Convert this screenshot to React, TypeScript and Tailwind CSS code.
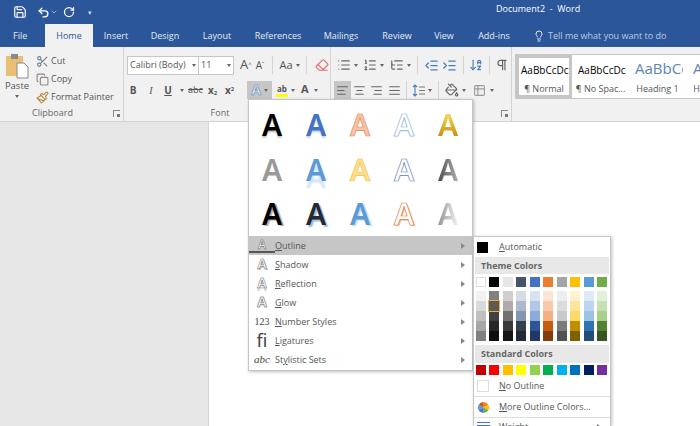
import {
  AlignCenter,
  AlignJustify,
  AlignLeft,
  AlignRight,
  ArrowDownAZ,
  ChevronDown,
  Copy,
  Eraser,
  IndentDecrease,
  IndentIncrease,
  Lightbulb,
  List,
  ListOrdered,
  ListTree,
  Paintbrush,
  PaintBucket,
  Pilcrow,
  RotateCw,
  Save,
  Scissors,
  Table2,
  Undo2,
} from "lucide-react";

const TABS = [
  { label: "Insert", w: "w-[46px]" },
  { label: "Design", w: "w-[52px]" },
  { label: "Layout", w: "w-[52px]" },
  { label: "References", w: "w-[70px]" },
  { label: "Mailings", w: "w-[56px]" },
  { label: "Review", w: "w-[56px]" },
  { label: "View", w: "w-[38px]" },
  { label: "Add-ins", w: "w-[62px]" },
];

const GOLD = "text-transparent bg-clip-text bg-gradient-to-b from-[#f5d84f] from-25% to-[#c48f08] to-75%";
const STEEL = "text-transparent bg-clip-text bg-gradient-to-r from-[#555] from-30% to-[#aaa] to-70%";
const SILVER = "text-transparent bg-clip-text bg-gradient-to-r from-[#999] from-30% to-[#eee] to-70%";

const GALLERY = [
  "text-black [text-shadow:0_2px_1px_#ccc]",
  "text-[#4472c4] [text-shadow:0_2px_1px_#c9d8ee]",
  "text-[#f6c3a6] [-webkit-text-stroke:0.7px_#e08a5c]",
  "text-white [-webkit-text-stroke:0.7px_#8fb4d3] [text-shadow:0_1px_1px_#d5e3f0]",
  GOLD,
  "text-[#999999]",
  "text-[#5b9bd5] [text-shadow:0_7px_2px_#d5e5f5]",
  "text-[#ffe08a] [-webkit-text-stroke:0.7px_#f2c14e]",
  "text-white [-webkit-text-stroke:0.7px_#5f80b8]",
  STEEL,
  "text-black [text-shadow:2px_1px_1px_#aaa]",
  "text-[#222a35] [text-shadow:2px_2px_1px_#9fc0dc]",
  "text-[#5b9bd5] [text-shadow:2px_1px_1px_#c4dcf2]",
  "text-white [-webkit-text-stroke:0.7px_#d9783a] [text-shadow:1px_1px_1px_#eab08a]",
  SILVER,
];

const MENU = [
  { icon: "A", iconClass: "text-[12px] text-white [-webkit-text-stroke:0.5px_#555] border-b-2 border-[#555] leading-[12px]", pre: "", key: "O", post: "utline", active: true },
  { icon: "A", iconClass: "text-[14px] text-white [-webkit-text-stroke:0.5px_#666] [text-shadow:1px_1px_0_#bbb]", pre: "", key: "S", post: "hadow" },
  { icon: "A", iconClass: "text-[14px] text-white [-webkit-text-stroke:0.5px_#666] [text-shadow:0_3px_1px_#ccc]", pre: "", key: "R", post: "eflection" },
  { icon: "A", iconClass: "text-[14px] text-white [-webkit-text-stroke:0.5px_#666] [text-shadow:0_0_2px_#999]", pre: "", key: "G", post: "low" },
  { icon: "123", iconClass: "text-[10px] text-[#444] font-['Liberation_Serif',serif] font-normal", pre: "", key: "N", post: "umber Styles" },
  { icon: "fi", iconClass: "text-[18px] text-[#444] font-normal font-['Noto_Sans',sans-serif]", pre: "", key: "L", post: "igatures" },
  { icon: "abc", iconClass: "text-[11px] italic text-[#444] font-normal font-['Liberation_Serif',serif]", pre: "St", key: "y", post: "listic Sets" },
];

const THEME = [
  ["#ffffff", "#f2f2f2", "#d9d9d9", "#bfbfbf", "#a6a6a6", "#808080"],
  ["#000000", "#808080", "#595959", "#404040", "#262626", "#0d0d0d"],
  ["#e7e6e6", "#d0cece", "#aeabab", "#767171", "#3a3838", "#171616"],
  ["#44546a", "#d6dce4", "#adb9ca", "#8496b0", "#333f4f", "#222a35"],
  ["#4472c4", "#d9e2f3", "#b4c6e7", "#8eaadb", "#2f5496", "#1f3864"],
  ["#ed7d31", "#fbe4d5", "#f7caac", "#f4b083", "#c55a11", "#833c0b"],
  ["#a5a5a5", "#ededed", "#dbdbdb", "#c9c9c9", "#7b7b7b", "#525252"],
  ["#ffc000", "#fff2cc", "#ffe599", "#ffd966", "#bf8f00", "#7f6000"],
  ["#5b9bd5", "#deeaf6", "#bdd6ee", "#9cc2e5", "#2e74b5", "#1f4e79"],
  ["#70ad47", "#e2efd9", "#c5e0b3", "#a8d08d", "#538135", "#385623"],
];

const STANDARD = ["#c00000", "#ff0000", "#ffc000", "#ffff00", "#92d050", "#00b050", "#00b0f0", "#0070c0", "#002060", "#7030a0"];

function Caret({ className = "" }: { className?: string }) {
  return <span className={`inline-block w-0 h-0 border-x-[2.5px] border-x-transparent border-t-[3px] border-t-[#666] ${className}`} />;
}

function Divider({ className = "" }: { className?: string }) {
  return <span className={`w-[1px] h-[18px] bg-[#d4d4d4] ${className}`} />;
}

function Launcher() {
  return (
    <span className="absolute right-[3px] bottom-[4px] w-[7px] h-[7px] border-l border-t border-[#888]">
      <span className="absolute right-0 bottom-0 w-[3px] h-[3px] bg-[#777]" />
    </span>
  );
}

function Group({ label, labelClass = "", className, children }: { label?: string; labelClass?: string; className: string; children: React.ReactNode }) {
  return (
    <div className={`relative flex flex-col h-full border-r border-[#d4d4d4] ${className}`}>
      <div className="flex-1 min-h-0">{children}</div>
      <div className={`h-[15px] text-center text-[9px] leading-[14px] text-[#666] ${labelClass}`}>{label}</div>
      <Launcher />
    </div>
  );
}

function Clipboard() {
  return (
    <Group label="Clipboard" labelClass="pr-[18px]" className="w-[124px]">
      <div className="flex pt-[6px]">
        <div className="w-[34px] flex flex-col items-center">
          <svg width="24" height="26" viewBox="0 0 24 26">
            <rect x="1" y="3" width="17" height="20" fill="#e8bf73" />
            <rect x="6" y="1" width="7" height="5" fill="#8a8a8a" />
            <path d="M12 10h7l4 4v11H12z" fill="#fff" stroke="#8a8a8a" />
          </svg>
          <span className="text-[9.5px] leading-[12px] text-[#555] mt-[1px]">Paste</span>
          <Caret className="mt-[3px]" />
        </div>
        <div className="ml-[2px] -mt-[1px] flex flex-col text-[9px] text-[#555] leading-[18px]">
          <div className="flex items-center gap-[2px]"><Scissors size={13} className="text-[#6b7f96]" />Cut</div>
          <div className="flex items-center gap-[2px]"><Copy size={13} className="text-[#888]" />Copy</div>
          <div className="flex items-center gap-[2px] whitespace-nowrap"><Paintbrush size={13} className="text-[#b5893f]" />Format Painter</div>
        </div>
      </div>
    </Group>
  );
}

function Font() {
  return (
    <Group label="Font" labelClass="pr-[14px]" className="w-[207px]">
      <div className="flex items-center pl-[3px] pt-[8px] h-[28px]">
        <div className="w-[72px] h-[19px] bg-white border border-[#c6c6c6] flex items-center justify-between px-[2px] text-[9px] text-[#555] whitespace-nowrap">
          Calibri (Body)<Caret />
        </div>
        <div className="w-[35px] h-[19px] bg-white border border-l-0 border-[#c6c6c6] flex items-center justify-between px-[2px] text-[9px] text-[#555]">
          11<Caret />
        </div>
        <span className="ml-[6px] text-[13px] text-[#555]">A<sup className="text-[6px]">^</sup></span>
        <span className="ml-[4px] text-[10px] text-[#555]">A<sup className="text-[6px]">ˇ</sup></span>
        <Divider className="ml-[8px]" />
        <span className="ml-[6px] text-[11px] text-[#555]">Aa</span>
        <Caret className="ml-[3px]" />
        <Divider className="ml-[6px]" />
        <Eraser size={14} className="ml-[8px] text-[#e0707a]" />
      </div>
      <div className="flex items-center h-[20px] mt-[5px] text-[10px] text-[#555]">
        <span className="w-[18px] text-center font-bold">B</span>
        <span className="w-[18px] text-center italic font-['Liberation_Serif',serif]">I</span>
        <span className="w-[16px] text-center underline font-bold">U</span>
        <Caret className="ml-[4px]" />
        <span className="ml-[3px] w-[17px] text-center text-[9px] line-through">abc</span>
        <span className="w-[17px] text-center font-bold">x<sub className="text-[6px]">2</sub></span>
        <span className="w-[17px] text-center font-bold">x<sup className="text-[6px]">2</sup></span>
        <div className="ml-[9px] w-[25px] h-[18px] bg-[#c6c6c6] flex items-center justify-center gap-[3px]">
          <span className="text-[14px] leading-none font-bold text-[#dce6f5] [-webkit-text-stroke:0.6px_#5b86c4]">A</span>
          <Caret />
        </div>
        <div className="ml-[4px] flex items-center gap-[3px]">
          <span className="text-[8px] leading-[11px] px-[1px] border-b-[3px] border-[#ffff00] font-bold">ab</span>
          <Caret />
        </div>
        <div className="ml-[6px] flex items-center gap-[5px]">
          <span className="text-[11px] font-bold border-b-[2px] border-[#eee]">A</span>
          <Caret />
        </div>
      </div>
    </Group>
  );
}

function LineSpacingIcon() {
  return (
    <svg width="13" height="13" viewBox="0 0 13 13" fill="none" className="ml-[5px]">
      <path d="M3 1v11M1 3l2-2 2 2M1 10l2 2 2-2" stroke="#4a7ebb" strokeWidth="1.1" />
      <path d="M7 3h6M7 6.5h6M7 10h6" stroke="#777" strokeWidth="1" />
    </svg>
  );
}

function Paragraph() {
  return (
    <Group className="w-[181px]">
      <div className="flex items-center h-[28px] pt-[8px] pl-[6px] text-[#666]">
        <List size={14} /><Caret className="ml-[3px]" />
        <ListOrdered size={14} className="ml-[5px]" /><Caret className="ml-[3px]" />
        <ListTree size={14} className="ml-[6px]" /><Caret className="ml-[3px]" />
        <Divider className="ml-[6px]" />
        <IndentDecrease size={15} className="ml-[6px] text-[#4a7ebb]" />
        <IndentIncrease size={15} className="ml-[3px] text-[#4a7ebb]" />
        <Divider className="ml-[6px]" />
        <ArrowDownAZ size={14} className="ml-[5px] text-[#4a7ebb]" />
        <Divider className="ml-[6px]" />
        <Pilcrow size={14} className="ml-[5px]" />
      </div>
      <div className="flex items-center h-[20px] mt-[5px] pl-[3px] text-[#666]">
        <span className="w-[17px] h-[18px] bg-[#c6c6c6] flex items-center justify-center"><AlignLeft size={13} /></span>
        <AlignCenter size={13} className="ml-[2px]" />
        <AlignRight size={13} className="ml-[4px]" />
        <AlignJustify size={13} className="ml-[5px]" />
        <Divider className="ml-[5px]" />
        <LineSpacingIcon />
        <Caret className="ml-[3px]" />
        <Divider className="ml-[6px]" />
        <PaintBucket size={14} className="ml-[6px]" /><Caret className="ml-[3px]" />
        <Table2 size={13} className="ml-[7px] text-[#999]" /><Caret className="ml-[4px]" />
      </div>
    </Group>
  );
}

function StyleCard({ sample, label, sampleClass, w, selected = false }: { sample: string; label: string; sampleClass: string; w: string; selected?: boolean }) {
  return (
    <div className={`flex flex-col items-center overflow-hidden shrink-0 h-full border-[3px] ${w} ${selected ? "border-[#c6c6c6]" : "border-white"}`}>
      <div className={`h-[22px] w-full flex items-end overflow-hidden whitespace-nowrap ${sampleClass}`}>{sample}</div>
      <div className="mt-[3px] text-[9px] text-[#555] whitespace-nowrap">{label}</div>
    </div>
  );
}

function Styles() {
  return (
    <div className="pl-[3px] pt-[7px] flex-1 min-w-0">
      <div className="flex h-[45px] bg-white border border-r-0 border-[#c6c6c6] overflow-hidden">
        <StyleCard selected w="w-[56px]" sample="AaBbCcDc" label="¶ Normal" sampleClass="pl-[2px] text-[10px] leading-[18px] text-black" />
        <StyleCard w="w-[57px]" sample="AaBbCcDc" label="¶ No Spac..." sampleClass="pl-[3px] text-[10px] leading-[18px] text-black" />
        <StyleCard w="w-[57px]" sample="AaBbCc" label="Heading 1" sampleClass="pl-[3px] text-[15px] leading-[21px] text-[#5b85b5]" />
        <StyleCard w="w-[57px]" sample="AaBbCc" label="Heading 2" sampleClass="pl-[4px] text-[15px] leading-[21px] text-[#5b85b5]" />
      </div>
    </div>
  );
}

function TextEffectsMenu() {
  return (
    <div className="absolute left-[248px] top-[99px] w-[225px] h-[272px] bg-white border border-[#c6c6c6] shadow-[1px_1px_3px_rgba(0,0,0,0.25)] flex flex-col">
      <div className="grid grid-cols-5 pl-[1px] pr-[2px] pt-[3px] h-[136px]">
        {GALLERY.map((cls) => (
          <div key={cls} className={`flex items-center justify-center h-[44.5px] text-[30px] font-semibold leading-none font-['Noto_Sans',sans-serif] ${cls}`}>
            A
          </div>
        ))}
      </div>
      {MENU.map((m) => (
        <div key={m.post} className={`h-[19px] flex items-center text-[9px] text-[#555] ${m.active ? "bg-[#c6c6c6]" : ""}`}>
          <span className={`w-[26px] text-center font-bold font-['Liberation_Sans',sans-serif] ${m.iconClass}`}>{m.icon}</span>
          <span className="flex-1">
            {m.pre}<span className="underline">{m.key}</span>{m.post}
          </span>
          <span className="mr-[7px] w-0 h-0 border-y-[3px] border-y-transparent border-l-[4px] border-l-[#888]" />
        </div>
      ))}
    </div>
  );
}

function ColorsMenu() {
  return (
    <div className="absolute left-[473px] top-[236px] w-[138px] h-[190px] overflow-hidden bg-white border border-b-0 border-[#c6c6c6] shadow-[1px_1px_3px_rgba(0,0,0,0.25)] text-[9px] text-[#555]">
      <div className="h-[20px] flex items-center">
        <span className="ml-[3px] w-[11px] h-[11px] bg-black" />
        <span className="ml-[11px]"><span className="underline">A</span>utomatic</span>
      </div>
      <div className="h-[17px] mx-[1px] bg-[#e8e8e8] flex items-center pl-[6px] font-bold text-[#666]">Theme Colors</div>
      <div className="flex gap-[3.5px] pl-[1.5px] pt-[3px]">
        {THEME.map((col, i) => (
          <div key={i} className="w-[10px] flex flex-col">
            <span className={`h-[10px] ${i === 0 ? "border border-[#ddd]" : ""}`} style={{ backgroundColor: col[0] }} />
            <div className="relative mt-[4px]">
              {col.slice(1).map((c) => (
                <span key={c} className="block h-[10px]" style={{ backgroundColor: c }} />
              ))}
              {i === 1 && <span className="absolute -left-[1px] top-[9px] w-[12px] h-[12px] border-[1.5px] border-[#f2a93b]" />}
            </div>
          </div>
        ))}
      </div>
      <div className="mt-[4px] h-[18px] mx-[1px] bg-[#e8e8e8] flex items-center pl-[6px] font-bold text-[#666]">Standard Colors</div>
      <div className="flex gap-[3.5px] pl-[1.5px] pt-[2px]">
        {STANDARD.map((c) => (
          <span key={c} className="w-[10px] h-[10px]" style={{ backgroundColor: c }} />
        ))}
      </div>
      <div className="h-[21px] flex items-center">
        <span className="ml-[3px] w-[12px] h-[12px] border border-[#ddd]" />
        <span className="ml-[10px]"><span className="underline">N</span>o Outline</span>
      </div>
      <div className="h-[21px] border-t border-[#ddd] flex items-center">
        <svg width="13" height="13" viewBox="0 0 14 14" className="ml-[3px]">
          <path d="M7 7V1a6 6 0 0 1 5.2 3z" fill="#ed7d31" />
          <path d="M7 7l5.2-3a6 6 0 0 1 0 6z" fill="#ffc000" />
          <path d="M7 7l5.2 3A6 6 0 0 1 7 13z" fill="#70ad47" />
          <path d="M7 7v6a6 6 0 0 1-5.2-3z" fill="#4472c4" />
          <path d="M7 7l-5.2 3a6 6 0 0 1 0-6z" fill="#5b9bd5" />
          <path d="M7 7L1.8 4A6 6 0 0 1 7 1z" fill="#c55a11" />
        </svg>
        <span className="ml-[9px] whitespace-nowrap"><span className="underline">M</span>ore Outline Colors...</span>
      </div>
      <div className="h-[18px] border-t border-[#ddd] flex items-center">
        <span className="ml-[3px] w-[13px] flex flex-col gap-[2px]">
          <span className="h-[1px] bg-[#4472c4]" />
          <span className="h-[2px] bg-[#4472c4]" />
          <span className="h-[2px] bg-[#4472c4]" />
        </span>
        <span className="ml-[9px] flex-1"><span className="underline">W</span>eight</span>
        <span className="mr-[9px] w-0 h-0 border-y-[3px] border-y-transparent border-l-[4px] border-l-[#666]" />
      </div>
    </div>
  );
}

export default function App() {
  return (
    <div className="relative w-[700px] h-[426px] overflow-hidden bg-white font-['Open_Sans','Noto_Sans',sans-serif]">
      <div className="h-[47px] bg-[#2b579a] text-white">
        <div className="relative h-[24px] flex items-center pl-[13px]">
          <Save size={14} className="text-white" />
          <Undo2 size={13} strokeWidth={2.5} className="ml-[10px]" />
          <ChevronDown size={8} className="text-[#cfdaea]" />
          <RotateCw size={12} strokeWidth={2.5} className="ml-[5px]" />
          <span className="ml-[13px] text-[7px] leading-none text-[#cfdaea]">▾</span>
          <span className="absolute left-[496px] top-[0px] text-[9px] leading-[18px] whitespace-pre">Document2  -  Word</span>
        </div>
        <div className="h-[23px] flex items-center text-[9px] text-[#e3eaf4]">
          <span className="w-[45px] pl-[13px]">File</span>
          <span className="w-[48px] h-full bg-[#f1f1f1] text-[#2b579a] flex items-center justify-center">Home</span>
          {TABS.map((t) => (
            <span key={t.label} className={`${t.w} text-center`}>{t.label}</span>
          ))}
          <span className="ml-[8px] flex items-center gap-[3px] text-[#bccbe2] whitespace-nowrap">
            <Lightbulb size={12} className="text-[#e3eaf4]" />Tell me what you want to do
          </span>
        </div>
      </div>

      <div className="h-[75px] bg-[#f1f1f1] border-b border-[#d2d2d2] flex">
        <Clipboard />
        <Font />
        <Paragraph />
        <Styles />
      </div>

      <div className="flex h-[304px]">
        <div className="w-[209px] bg-[#e6e6e6] border-r border-[#d4d4d4]" />
        <div className="flex-1 bg-white" />
      </div>

      <TextEffectsMenu />
      <ColorsMenu />
    </div>
  );
}
